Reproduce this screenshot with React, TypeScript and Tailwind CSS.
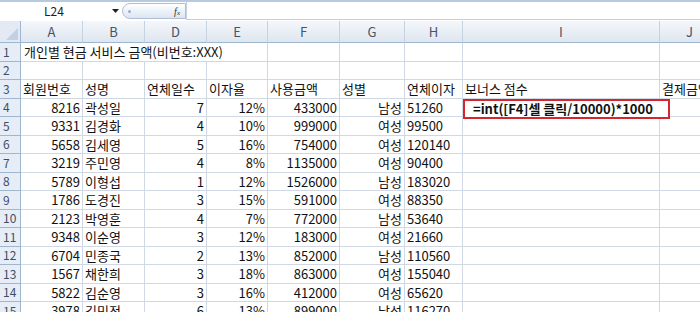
import React from "react";

const cols = [
  { key: "A", w: 62 },
  { key: "B", w: 62 },
  { key: "D", w: 62 },
  { key: "E", w: 61 },
  { key: "F", w: 72 },
  { key: "G", w: 65 },
  { key: "H", w: 58 },
  { key: "I", w: 197 },
  { key: "J", w: 60 },
];

type Cell = { v: string; right?: boolean };

const rows: [string, string, string, string, string, string, string][] = [
  ["8216", "곽성일", "7", "12%", "433000", "남성", "51260"],
  ["9331", "김경화", "4", "10%", "999000", "여성", "99500"],
  ["5658", "김세영", "5", "16%", "754000", "여성", "120140"],
  ["3219", "주민영", "4", "8%", "1135000", "여성", "90400"],
  ["5789", "이형섭", "1", "12%", "1526000", "남성", "183020"],
  ["1786", "도경진", "3", "15%", "591000", "여성", "88350"],
  ["2123", "박영훈", "4", "7%", "772000", "남성", "53640"],
  ["9348", "이순영", "3", "12%", "183000", "여성", "21660"],
  ["6704", "민종국", "2", "13%", "852000", "남성", "110560"],
  ["1567", "채한희", "3", "18%", "863000", "여성", "155040"],
  ["5822", "김순영", "3", "16%", "412000", "여성", "65620"],
  ["3978", "김민정", "6", "13%", "899000", "남성", "116270"],
];

const font = { fontFamily: '"Noto Sans CJK KR", "Noto Sans", sans-serif' };

function RowHead({ n }: { n: number }) {
  return (
    <div className="w-[21px] shrink-0 h-full flex items-center pl-[3px] bg-[#e7edf6] border-r border-b border-[#9eb6ce] text-[12px] text-[#3f4e63]">
      {n}
    </div>
  );
}

function DataCell({ w, c }: { w: number; c?: Cell }) {
  return (
    <div
      className={`shrink-0 h-full flex items-center border-r border-b border-[#d0d7e5] px-[2px] whitespace-nowrap overflow-hidden ${
        c?.right ? "justify-end" : "justify-start"
      }`}
      style={{ width: w }}
    >
      {c?.v}
    </div>
  );
}

function Row({ n, cells }: { n: number; cells: (Cell | undefined)[] }) {
  return (
    <div className="flex h-[18.5px]">
      <RowHead n={n} />
      {cols.map((col, i) => (
        <DataCell key={col.key} w={col.w} c={cells[i]} />
      ))}
    </div>
  );
}

export default function App() {
  return (
    <div className="w-[700px] h-[312px] overflow-hidden bg-white text-[13px] text-[#111]" style={font}>
      {/* formula bar */}
      <div className="h-[20px] flex border-t-2 border-[#b8cae0] bg-white">
        <div className="w-[108px] flex items-center justify-center text-[12px] text-[#222] pb-[1px]">L24</div>
        <div className="w-[14px] flex items-center justify-center">
          <svg width="7" height="4" viewBox="0 0 7 4">
            <path d="M0 0h7L3.5 4z" fill="#222" />
          </svg>
        </div>
        <div className="w-[64px] h-[16px] mt-[1px] flex items-center justify-between rounded-l-full border border-[#aebfd6] bg-gradient-to-b from-[#ffffff] to-[#dce6f2] pl-[5px] pr-[5px]">
          <span className="w-[3px] h-[3px] rounded-full bg-[#9aaecb]" />
          <span className="italic text-[10px] text-[#333]" style={{ fontFamily: '"Liberation Serif", serif' }}>
            f<span className="text-[7px]">x</span>
          </span>
        </div>
        <div className="flex-1 border-l border-b border-[#c3d0e0]" />
      </div>

      {/* column headers */}
      <div className="flex h-[22px] mt-[1px]">
        <div className="w-[21px] shrink-0 h-full relative bg-[#e3eaf4] border-r border-b border-[#9eb6ce]">
          <svg className="absolute right-[2px] bottom-[2px]" width="12" height="12" viewBox="0 0 12 12">
            <path d="M12 0v12H0z" fill="#c2d0e2" />
          </svg>
        </div>
        {cols.map((c) => (
          <div
            key={c.key}
            className="shrink-0 h-full flex items-center justify-center bg-gradient-to-b from-[#f4f7fb] to-[#dfe6ef] border-r border-b border-r-[#c5d2e2] border-b-[#9eb6ce] text-[13px] text-[#44546a]"
            style={{ width: c.w }}
          >
            {c.key}
          </div>
        ))}
      </div>

      {/* row 1 */}
      <div className="flex h-[18.5px]">
        <RowHead n={1} />
        <div className="w-[247px] shrink-0 h-full flex items-center border-r border-b border-[#d0d7e5] px-[3px] whitespace-nowrap">
          개인별 현금 서비스 금액(비번호:XXX)
        </div>
        {cols.slice(4).map((col) => (
          <DataCell key={col.key} w={col.w} />
        ))}
      </div>

      <Row n={2} cells={[]} />
      <Row
        n={3}
        cells={[
          { v: "회원번호" },
          { v: "성명" },
          { v: "연체일수" },
          { v: "이자율" },
          { v: "사용금액" },
          { v: "성별" },
          { v: "연체이자" },
          { v: "보너스 점수" },
          { v: "결제금액" },
        ]}
      />

      <div className="relative">
        {rows.map((r, i) => (
          <Row
            key={i}
            n={i + 4}
            cells={[
              { v: r[0], right: true },
              { v: r[1] },
              { v: r[2], right: true },
              { v: r[3], right: true },
              { v: r[4], right: true },
              { v: r[5], right: true },
              { v: r[6] },
            ]}
          />
        ))}
        <div className="absolute left-[463px] top-[0px] w-[207px] h-[20px] border-2 border-[#d4262c] bg-white flex items-center pl-[8px] font-bold text-[13px] text-[#111] whitespace-nowrap">
          =int([F4]셀 클릭/10000)*1000
        </div>
      </div>
    </div>
  );
}
